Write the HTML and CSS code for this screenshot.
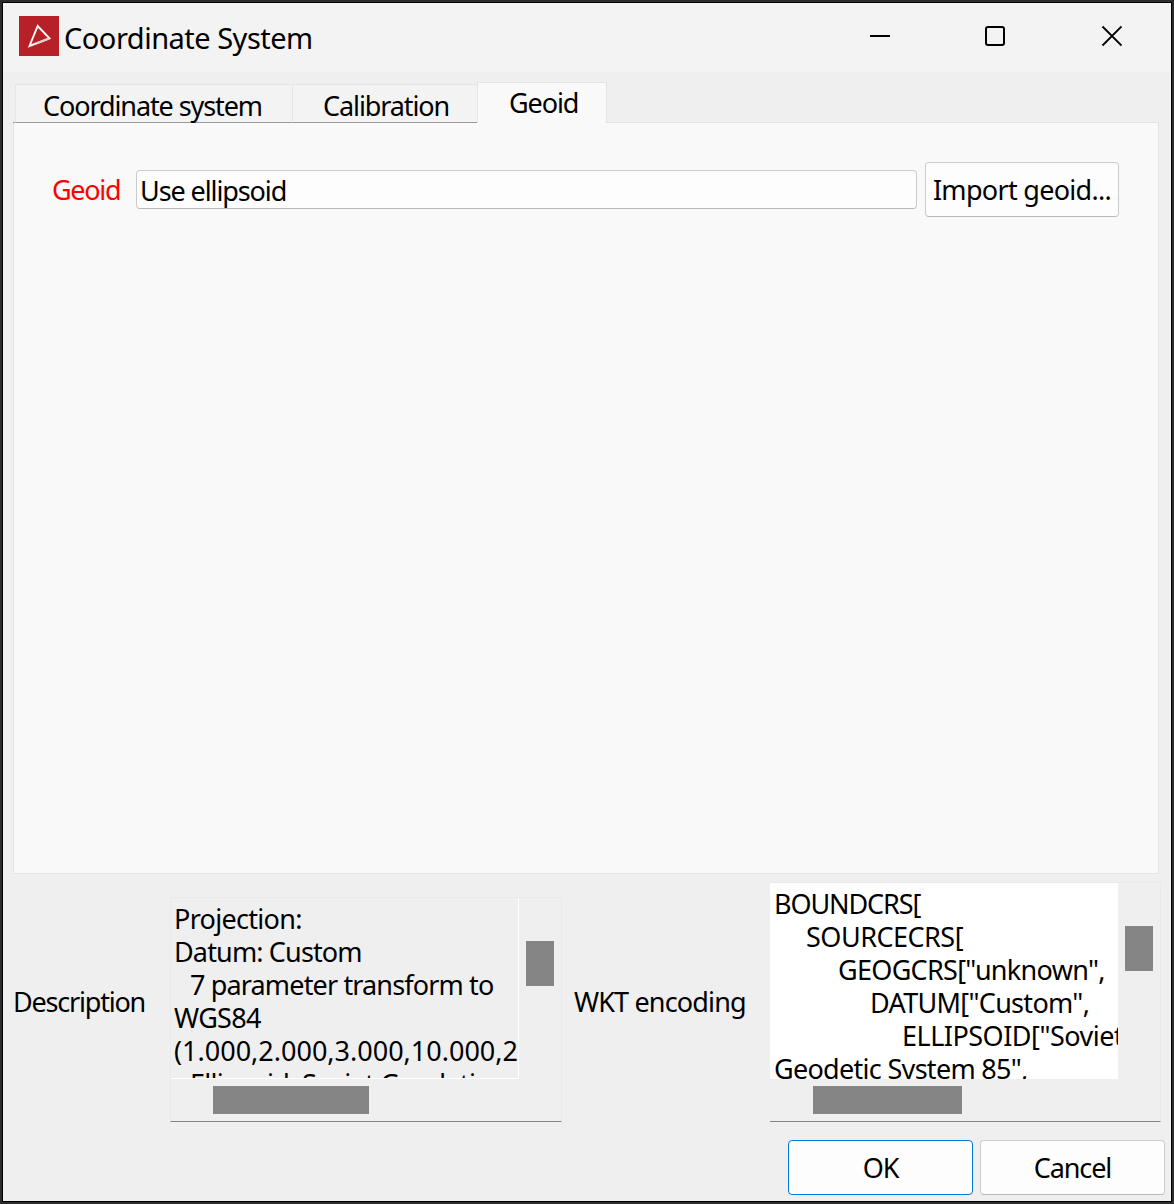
FILE: index.html
```html
<!DOCTYPE html>
<html lang="en">
<head>
<meta charset="utf-8">
<title>Coordinate System</title>
<link rel="stylesheet" href="styles.css">
</head>
<body>
<div class="window">
  <header class="titlebar">
    <svg class="logo" viewBox="0 0 40 40"><defs><linearGradient id="edge" x1="0" y1="1" x2="1" y2="0"><stop offset="0.3" stop-color="#fff"/><stop offset="1" stop-color="#e3a9ab"/></linearGradient></defs><rect width="40" height="40" fill="#b72027"/><path d="M10.500 30 18.700 10 30.500 22.300Z" fill="none" stroke="#fff" stroke-width="1.900"/><path d="M18 27.300 30 22.500" stroke="#dcc" stroke-width="2"/></svg>
    <h1 class="title">Coordinate System</h1>
    <svg class="controls" viewBox="0 0 252 24" fill="none" stroke="#000" stroke-width="2"><path d="M0 12H20"/><rect x="116" y="3" width="18" height="18" rx="2"/><path d="M232.500 2.500 251.500 21.500M251.500 2.500 232.500 21.500" stroke-width="1.800"/></svg>
  </header>
  <nav class="tabs">
    <div class="tab tab-first">Coordinate system</div>
    <div class="tab tab-second">Calibration</div>
    <div class="tab tab-active">Geoid</div>
  </nav>
  <main class="panel">
    <label class="geoid-label">Geoid</label>
    <div class="combo">Use ellipsoid</div>
    <button class="button import">Import geoid...</button>
  </main>
  <section class="details">
    <div class="label label-desc">Description</div>
    <div class="box box-desc">
      <div class="text">
        <p class="snug">Projection:</p>
        <p class="close">Datum: Custom</p>
        <p class="in-half close">7 parameter transform to</p>
        <p class="snug">WGS84</p>
        <p class="plain">(1.000,2.000,3.000,10.000,2</p>
        <p class="in-half snug">Ellipsoid: Soviet Geodetic</p>
      </div>
      <div class="vbar"><i></i></div>
      <div class="hbar"><i></i></div>
    </div>
    <div class="label label-wkt">WKT encoding</div>
    <div class="box box-wkt">
      <div class="text">
        <p class="tight">BOUNDCRS[</p>
        <p class="in-1 loose">SOURCECRS[</p>
        <p class="in-2 snug">GEOGCRS["unknown",</p>
        <p class="in-3 snug">DATUM["Custom",</p>
        <p class="in-4 loose">ELLIPSOID["Soviet</p>
        <p class="snug">Geodetic System 85",</p>
      </div>
      <div class="vbar"><i></i></div>
      <div class="hbar"><i></i></div>
    </div>
  </section>
  <footer class="actions">
    <button class="button ok">OK</button>
    <button class="button cancel">Cancel</button>
  </footer>
</div>
</body>
</html>
```
FILE: styles.css
```css
* { box-sizing: border-box; margin: 0; }
body {
  width: 1174px;
  height: 1204px;
  padding: 2px;
  background: #2c2c2c;
  color: #000;
  font: 27px/36px "Noto Sans", sans-serif;
  letter-spacing: -1.1px;
  overflow: hidden;
}
.window {
  display: flex;
  flex-direction: column;
  height: 1200px;
  border: 1px solid #000;
  background: #efefef;
}
.titlebar {
  display: flex;
  flex: none;
  height: 69px;
  padding: 13px 49px 0 16px;
  background: #f3f3f3;
}
.logo { width: 40px; height: 40px; }
.title {
  margin-left: 5px;
  font-size: 29px;
  font-weight: 400;
  line-height: 43px;
  letter-spacing: -0.5px;
}
.controls { width: 252px; height: 24px; margin: 8px 0 0 auto; }

/* Tab strip: the rule under it continues on both sides of the tabs */
.tabs {
  display: flex;
  flex: none;
  align-items: flex-end;
  height: 51px;
  padding: 0 12px 0 10px;
}
.tabs::before { content: ""; width: 2px; border-bottom: 1px solid #999; }
.tabs::after { content: ""; flex: 1; border-bottom: 1px solid #e5e5e5; }
.tab {
  height: 39px;
  border: 1px solid #e5e5e5;
  border-width: 1px 0 1px 1px;
  border-bottom-color: #999;
  background: #f3f3f3;
  white-space: nowrap;
}
.tab-first { width: 277px; padding: 3px 0 0 27px; }
.tab-second { width: 185px; padding: 3px 0 0 30px; }
.tab-active {
  width: 130px;
  height: 41px;
  padding: 2px 0 0 31px;
  border-right-width: 1px;
  border-bottom: 0;
  background: #f9f9f9;
}
.panel {
  display: grid;
  flex: none;
  grid-template-columns: 84px 781px 194px;
  align-content: start;
  width: 1146px;
  height: 751px;
  margin-left: 10px;
  padding: 39px 0 0 38px;
  border: 1px solid #e5e5e5;
  border-top: 0;
  background: #f9f9f9;
}
.geoid-label { padding-top: 10px; color: #f00; letter-spacing: -1.3px; }
.combo {
  height: 39px;
  margin-top: 8px;
  padding: 2px 0 0 3px;
  border: 1px solid #ccc;
  border-bottom-color: #b9b9b9;
  border-radius: 4px;
  background: #fdfdfd;
}
.button {
  height: 55px;
  padding: 0;
  border: 1px solid #ccc;
  border-bottom-color: #b9b9b9;
  border-radius: 4px;
  background: #fdfdfd;
  color: inherit;
  font: inherit;
  letter-spacing: inherit;
  white-space: nowrap;
}
.import { width: 194px; margin-left: 8px; letter-spacing: -0.7px; }

.details { display: flex; flex: none; height: 247px; padding: 8px 0 0 9px; }
.label { padding-top: 102px; white-space: nowrap; }
.label-desc { width: 158px; padding-left: 1px; letter-spacing: -1.2px; }
.label-wkt { width: 208px; padding-left: 12px; letter-spacing: -0.85px; }
.box {
  display: grid;
  grid-template-columns: 348px 1fr;
  border: 1px solid #e9e9e9;
  border-bottom-color: #848484;
}
.box-desc { width: 392px; height: 225px; margin-top: 15px; grid-template-rows: 181px 1fr; }
.box-wkt { width: 391px; height: 240px; grid-template-rows: 196px 1fr; border-left-width: 0; }
.text { overflow: hidden; line-height: 33px; white-space: nowrap; }
.text p { height: 33px; }
.box-desc .text { padding: 4px 0 0 3px; border: 1px solid #fff; border-width: 0 1px 1px 0; }
.box-wkt .text { padding: 4px 0 0 4px; background: #fff; }

/* Letter fit of the individual lines */
.plain { letter-spacing: 0; }
.loose { letter-spacing: -0.5px; }
.snug { letter-spacing: -0.7px; }
.close { letter-spacing: -0.85px; }
.tight { letter-spacing: -1.1px; }

/* Indentation steps */
.in-half { padding-left: 16px; }
.in-1 { padding-left: 32px; }
.in-2 { padding-left: 64px; }
.in-3 { padding-left: 96px; }
.in-4 { padding-left: 128px; }

.vbar { padding: 43px 0 0 7px; }
.vbar i, .hbar i { display: block; background: #858585; }
.vbar i { width: 28px; height: 45px; }
.hbar { padding: 7px 0 0 42px; }
.hbar i { width: 156px; height: 28px; }
.box-wkt .hbar i { width: 149px; margin-left: 1px; }

.actions { display: flex; gap: 7px; padding: 19px 0 0 785px; }
.ok, .cancel { width: 185px; }
.ok { border-color: #0078d4; }
```
